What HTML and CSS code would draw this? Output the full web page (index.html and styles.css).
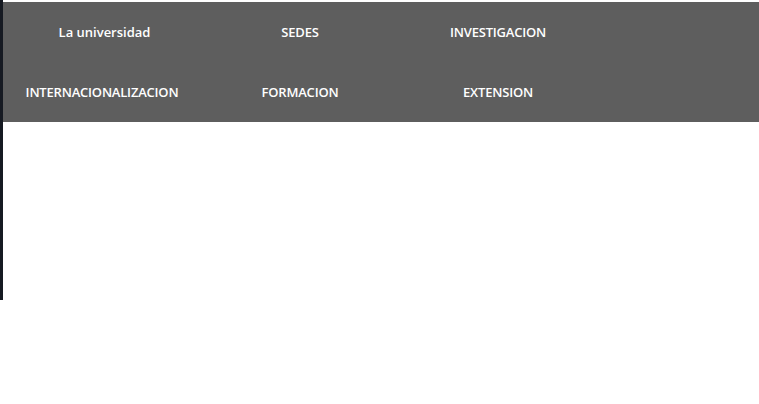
FILE: index.html
```html
<!DOCTYPE html>
<html lang="es">
<head>
<meta charset="utf-8">
<title>Menu</title>
<link rel="stylesheet" href="styles.css">
</head>
<body>
<div class="page">
  <div class="strip"></div>
  <nav class="menu">
    <a class="item item-lower" href="#">La universidad</a>
    <a class="item" href="#">SEDES</a>
    <a class="item" href="#">INVESTIGACION</a>
    <a class="item" href="#">INTERNACIONALIZACION</a>
    <a class="item" href="#">FORMACION</a>
    <a class="item" href="#">EXTENSION</a>
  </nav>
</div>
</body>
</html>
```
FILE: styles.css
```css
html, body {
  margin: 0;
  padding: 0;
  background: #ffffff;
}
.page {
  display: flex;
  align-items: flex-start;
}
.strip {
  width: 3px;
  height: 300px;
  background: #161a22;
  flex: none;
}
.menu {
  flex: 1;
  margin-top: 2px;
  background: #5e5e5e;
  display: grid;
  grid-template-columns: 198px 198px 198px;
  grid-auto-rows: 60px;
  font-family: "Open Sans", sans-serif;
  font-weight: 600;
  font-size: 13px;
}
.item {
  color: #ffffff;
  text-decoration: none;
  display: flex;
  align-items: center;
  justify-content: center;
  letter-spacing: -0.2px;
}
.item-lower {
  letter-spacing: 0;
  padding-left: 5px;
}
```
